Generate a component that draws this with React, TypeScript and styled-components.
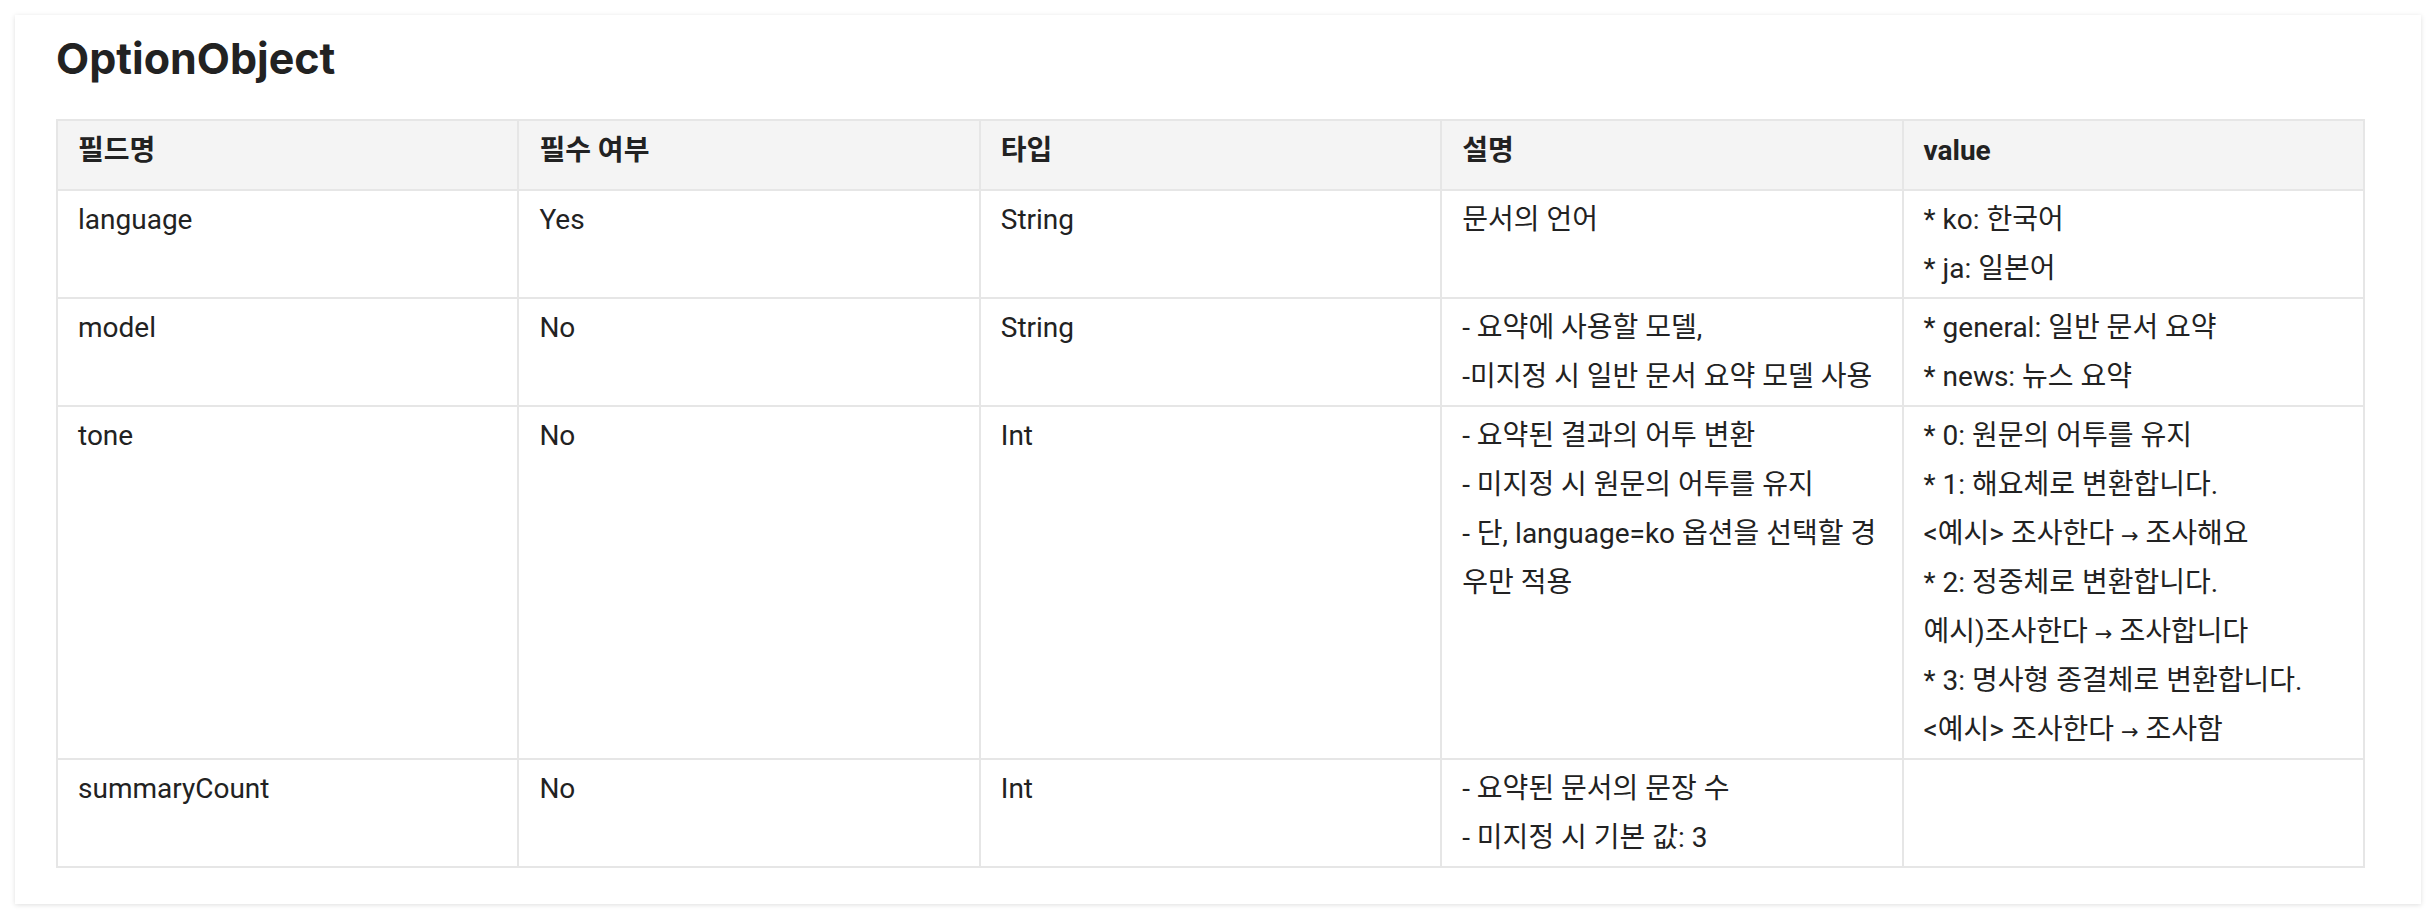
import styled, { createGlobalStyle } from 'styled-components'

interface IOptionRow {
    field: string
    required: string
    type: string
    description: string[]
    value: string[]
}

const rows: IOptionRow[] = [
    {
        field: 'language',
        required: 'Yes',
        type: 'String',
        description: ['문서의 언어'],
        value: ['* ko: 한국어', '* ja: 일본어'],
    },
    {
        field: 'model',
        required: 'No',
        type: 'String',
        description: ['- 요약에 사용할 모델,', '-미지정 시 일반 문서 요약 모델 사용'],
        value: ['* general: 일반 문서 요약', '* news: 뉴스 요약'],
    },
    {
        field: 'tone',
        required: 'No',
        type: 'Int',
        description: ['- 요약된 결과의 어투 변환', '- 미지정 시 원문의 어투를 유지', '- 단, language=ko 옵션을 선택할 경우만 적용'],
        value: [
            '* 0: 원문의 어투를 유지',
            '* 1: 해요체로 변환합니다.',
            '<예시> 조사한다 → 조사해요',
            '* 2: 정중체로 변환합니다.',
            '예시)조사한다 → 조사합니다',
            '* 3: 명사형 종결체로 변환합니다.',
            '<예시> 조사한다 → 조사함',
        ],
    },
    {
        field: 'summaryCount',
        required: 'No',
        type: 'Int',
        description: ['- 요약된 문서의 문장 수', '- 미지정 시 기본 값: 3'],
        value: [],
    },
]

const GlobalStyle = createGlobalStyle`
    body {
        margin: 0;
        background: #ffffff;
        font-family: Roboto, "Noto Sans CJK KR", sans-serif;
        color: #222222;
    }
`

const Page = styled.div`
    padding: 15px;
`

const Card = styled.section`
    background: #ffffff;
    box-shadow: 0 1px 5px rgba(0, 0, 0, 0.13);
    padding: 18px 56px 36px 41px;
`

const Title = styled.h2`
    margin: 0 0 36px;
    font-family: Inter, "Noto Sans", sans-serif;
    font-weight: 700;
    font-size: 43px;
    line-height: 50px;
    color: #222222;
`

const Table = styled.table`
    width: 100%;
    table-layout: fixed;
    border-collapse: collapse;
    border: 2px solid #e6e6e6;
    font-size: 28px;
    line-height: 49px;
`

const HeadCell = styled.th`
    background: #f4f4f4;
    border: 2px solid #e6e6e6;
    padding: 5px 20px 14px;
    text-align: left;
    vertical-align: top;
    font-weight: 700;
`

const Cell = styled.td`
    border: 2px solid #e6e6e6;
    padding: 4px 20px;
    vertical-align: top;
`

const Line = styled.div`
    margin: 0;
`

// the arrow in the source renders small, not as a full-width CJK glyph
const Arrow = styled.span`
    font-family: "DejaVu Sans", sans-serif;
    font-size: 21px;
    line-height: 0;
`

const renderLine = (line: string) => {
    const parts = line.split('→')
    if (parts.length === 1) return line
    return (
        <>
            {parts[0]}
            <Arrow>→</Arrow>
            {parts[1]}
        </>
    )
}

const OptionObjectTable = () => {
    return (
        <>
            <GlobalStyle />
            <Page>
                <Card>
                    <Title>OptionObject</Title>
                    <Table>
                        <thead>
                            <tr>
                                <HeadCell>필드명</HeadCell>
                                <HeadCell>필수 여부</HeadCell>
                                <HeadCell>타입</HeadCell>
                                <HeadCell>설명</HeadCell>
                                <HeadCell>value</HeadCell>
                            </tr>
                        </thead>
                        <tbody>
                            {rows.map((row) => (
                                <tr key={row.field}>
                                    <Cell>{row.field}</Cell>
                                    <Cell>{row.required}</Cell>
                                    <Cell>{row.type}</Cell>
                                    <Cell>
                                        {row.description.map((line) => (
                                            <Line key={line}>{line}</Line>
                                        ))}
                                    </Cell>
                                    <Cell>
                                        {row.value.map((line) => (
                                            <Line key={line}>{renderLine(line)}</Line>
                                        ))}
                                    </Cell>
                                </tr>
                            ))}
                        </tbody>
                    </Table>
                </Card>
            </Page>
        </>
    )
}

export default OptionObjectTable
